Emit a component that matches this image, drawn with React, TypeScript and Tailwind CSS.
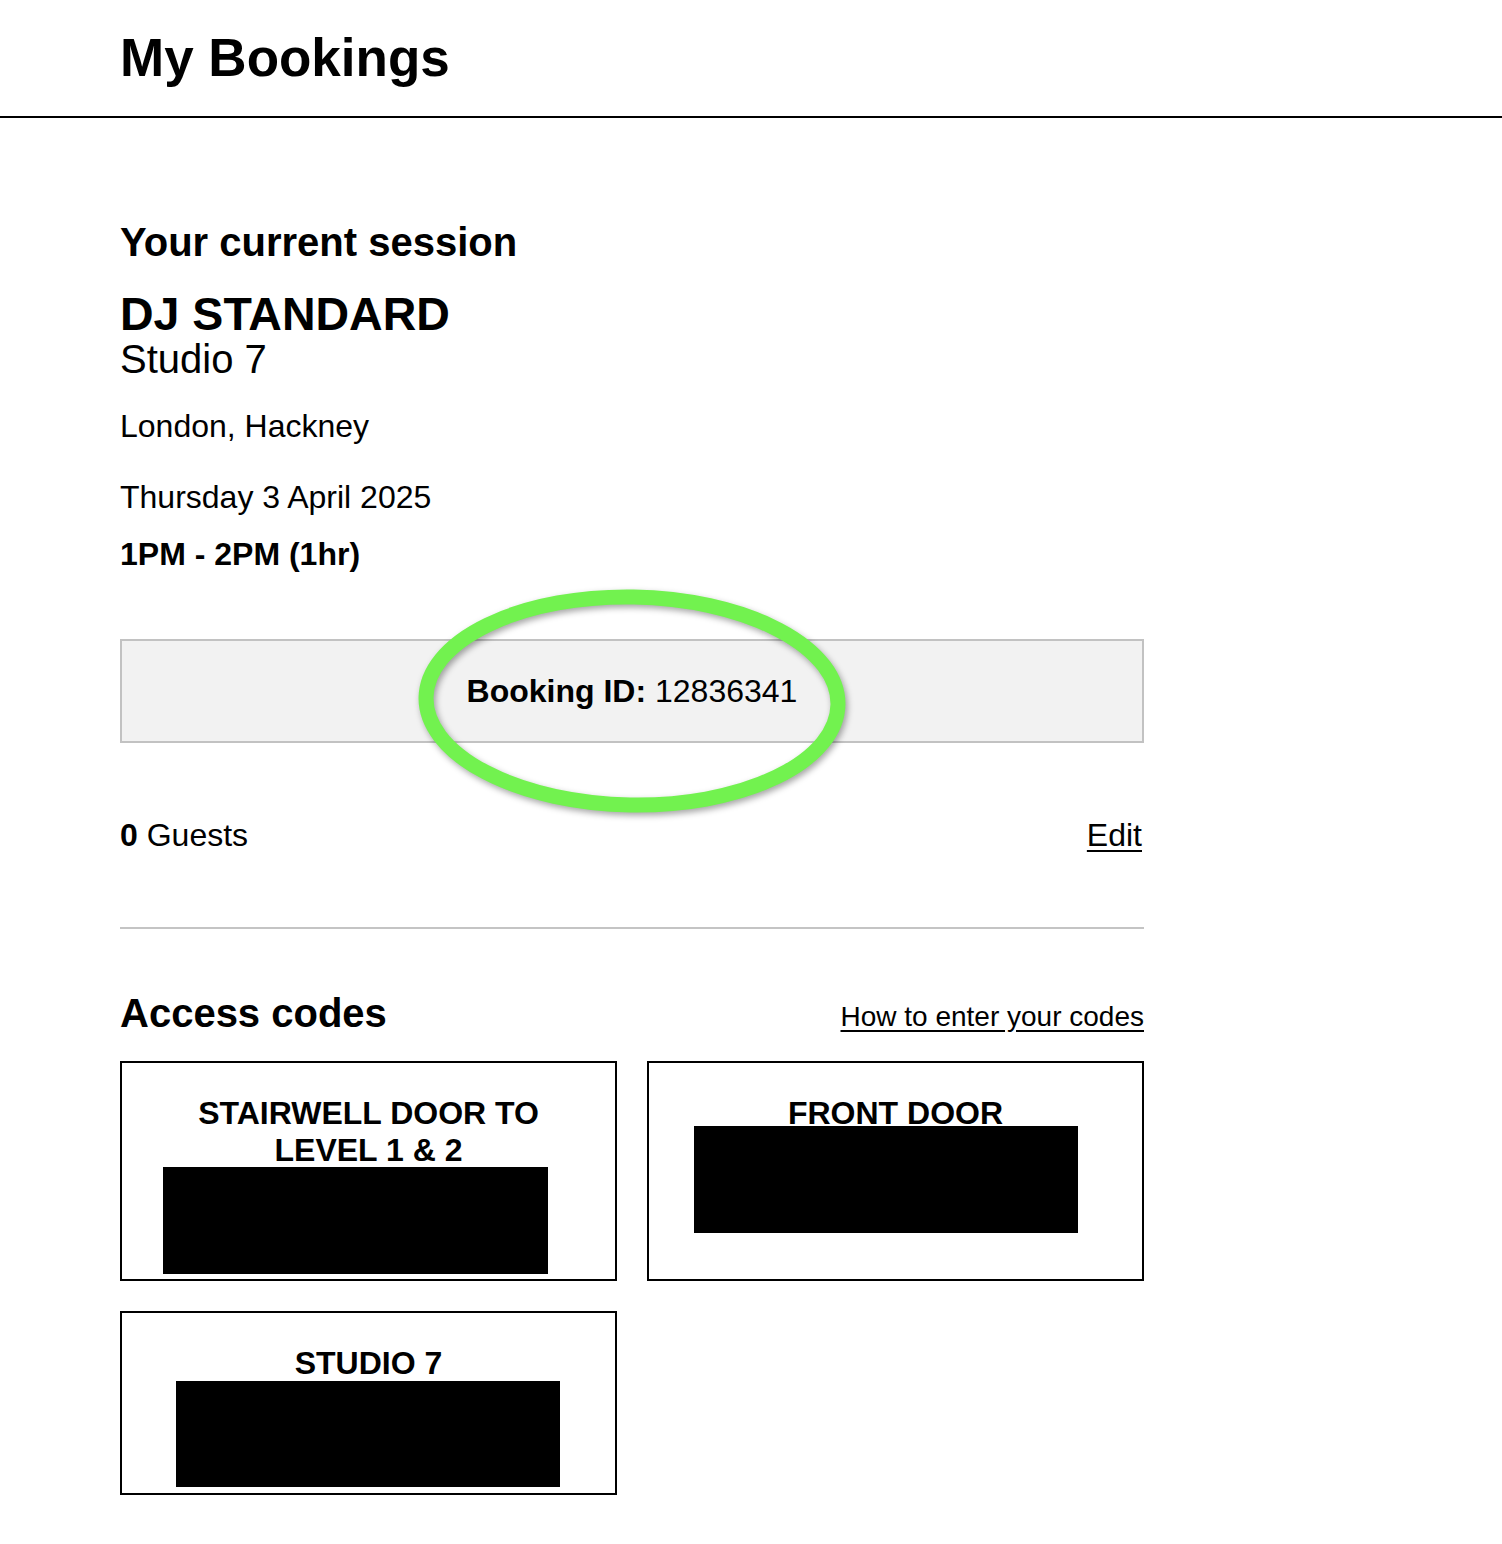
import React from 'react';

const codes = [
    { title: ['STAIRWELL DOOR TO', 'LEVEL 1 & 2'], box: 'ml-[41px] mt-[-2px] w-[385px] h-[107px]', lead: 'leading-[37px]' },
    { title: ['FRONT DOOR'], box: 'ml-[45px] mt-[-5px] w-[384px] h-[107px]', lead: 'leading-[36px]' },
    { title: ['STUDIO 7'], box: 'ml-[54px] mt-0 w-[384px] h-[106px]', lead: 'leading-[36px]' },
];

function CodeCard({ title, box, lead, tall }: { title: string[]; box: string; lead: string; tall?: boolean }) {
    return (
        <div className={`border-2 border-black pt-[32px] pb-[6px] ${tall ? 'h-[220px]' : ''}`}>
            {title.map((line) => (
                <div key={line} className={`text-center text-[32px] font-bold ${lead}`}>
                    {line}
                </div>
            ))}
            {/* redacted code */}
            <div className={`bg-black ${box}`} />
        </div>
    );
}

export default function App() {
    return (
        <div className="min-h-screen w-full bg-white text-black font-['Liberation_Sans',Arial,sans-serif]">
            {/* Header */}
            <header className="h-[118px] border-b-2 border-black flex items-center px-[120px]">
                <h1 className="text-[53px] leading-[64px] font-bold">My Bookings</h1>
            </header>

            <main className="w-[1144px] pl-[120px] pb-[50px]">
                {/* Current session */}
                <h2 className="mt-[102px] text-[40px] leading-[45px] font-bold">Your current session</h2>
                <div className="mt-[24px] text-[46.5px] leading-[50px] font-bold">DJ STANDARD</div>
                <div className="text-[40px] leading-[40px]">Studio 7</div>
                <p className="mt-[29px] text-[32px] leading-[36px]">London, Hackney</p>
                <p className="mt-[35px] text-[32px] leading-[36px]">Thursday 3 April 2025</p>
                <p className="mt-[21px] text-[32px] leading-[36px] font-bold">1PM - 2PM (1hr)</p>

                <div className="relative mt-[67px]">
                    <div className="h-[104px] border-2 border-[#c2c2c2] bg-[#f2f2f2] flex items-center justify-center text-[32px] leading-[36px]">
                        <span>
                            <b>Booking ID:</b> 12836341
                        </span>
                    </div>
                    {/* highlight ring */}
                    <svg
                        className="absolute left-[282px] top-[-68px] drop-shadow-[2px_3px_3px_rgba(0,0,0,0.35)] pointer-events-none"
                        width="460"
                        height="260"
                        viewBox="0 0 460 260"
                    >
                        <ellipse
                            cx="230"
                            cy="130"
                            rx="206"
                            ry="104"
                            fill="none"
                            stroke="#72f24f"
                            strokeWidth="15"
                            transform="rotate(1 230 130)"
                        />
                    </svg>
                </div>

                <div className="mt-[74px] flex items-center justify-between text-[32px] leading-[36px]">
                    <span>
                        <b>0</b> Guests
                    </span>
                    <a href="#" className="underline underline-offset-[4px] decoration-2 mr-[2px]">
                        Edit
                    </a>
                </div>

                <hr className="mt-[74px] border-0 h-[2px] bg-[#c4c4c4]" />

                {/* Access codes */}
                <div className="mt-[62px] flex items-center justify-between">
                    <h2 className="text-[40px] leading-[45px] font-bold">Access codes</h2>
                    <a href="#" className="mt-[6px] text-[28px] leading-[32px] underline underline-offset-[4px]">
                        How to enter your codes
                    </a>
                </div>

                <div className="mt-[25px] grid grid-cols-2 gap-[30px] items-start">
                    <CodeCard {...codes[0]} tall />
                    <CodeCard {...codes[1]} tall />
                    <CodeCard {...codes[2]} />
                </div>
            </main>
        </div>
    );
}
